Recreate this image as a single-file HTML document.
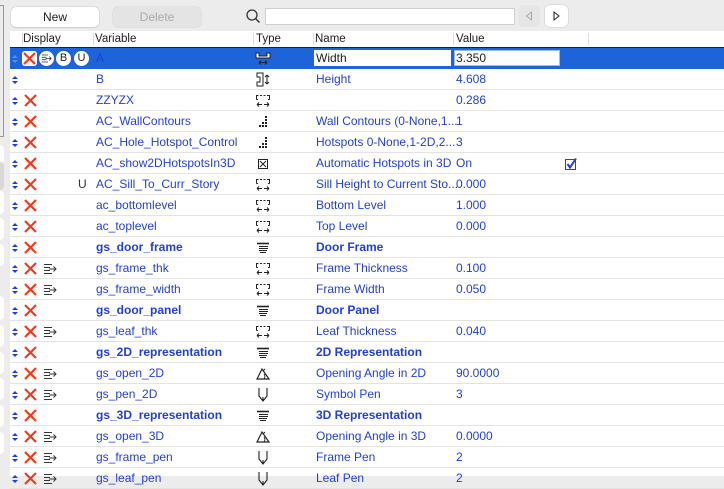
<!DOCTYPE html>
<html><head><meta charset="utf-8"><style>
*{margin:0;padding:0;box-sizing:border-box}
body{width:724px;height:476px;overflow:hidden;background:#ececec;font-family:"Liberation Sans",Helvetica,sans-serif;font-size:12px;position:relative}
.abs{position:absolute}
.btn{position:absolute;top:7px;height:20px;width:88px;border-radius:5px;text-align:center;line-height:20px;font-size:12px}
.tbl{position:absolute;left:10px;top:31px;width:714px;height:445px;background:#fff}
.hd{position:absolute;top:0;left:0;width:714px;height:17px;border-bottom:1px solid #222;background:#fff}
.hd span{position:absolute;top:2px;font-size:11.5px;color:#222}
.hd i{position:absolute;top:2px;height:12px;border-left:1px solid #ddd}
.r{position:absolute;left:0;width:714px;height:21px;border-bottom:1px solid #e3e3e3;color:#1f3ee6}
.r span{position:absolute;top:3px;white-space:nowrap}
.b{font-weight:bold}
.ud{position:absolute;left:2px;top:6px;width:6px;height:10px}
.x{position:absolute;left:13px;top:3px;width:15px;height:15px}
.hi{position:absolute;left:33px;top:5px;width:14px;height:12px}
.ic{position:absolute;left:245px;top:3px;width:16px;height:15px}
.sel{background:#1c64d8;color:#fff}
</style></head><body>
<svg width="0" height="0" style="position:absolute">
<defs>
<symbol id="ud" viewBox="0 0 6 10"><path d="M0 4L3 1L6 4Z M0 6L3 9L6 6Z" fill="#1f3ee6"/></symbol>
<symbol id="udw" viewBox="0 0 6 10"><path d="M0 4L3 1L6 4Z M0 6L3 9L6 6Z" fill="#5a8ee8"/></symbol>
<symbol id="x" viewBox="0 0 15 15"><path d="M2 2L13 13M13 2L2 13" stroke="#f23a1e" stroke-width="2.2"/></symbol>
<symbol id="hi" viewBox="0 0 14 12"><path d="M1 1.5H9M1 4.5H7M1 7.5H7M1 10.5H9M6 6H13M10.5 3.5L13 6L10.5 8.5" stroke="#333" stroke-width="1" fill="none"/></symbol>
<symbol id="len" viewBox="0 0 16 15"><path d="M1.5 6.5V2.5H3.5M5 2.5H7M8.5 2.5H10.5M12 2.5H14.5V6.5M1.5 6.5H3M13 6.5H14.5" stroke="#222" stroke-width="1" fill="none"/><path d="M2 11.5H14M2 11.5L4 9.5M2 11.5L4 13.5M14 11.5L12 9.5M14 11.5L12 13.5" stroke="#222" stroke-width="1" fill="none"/><path d="M7 11.5H9" stroke="#fff"/></symbol>
<symbol id="int" viewBox="0 0 16 15"><g fill="#222"><rect x="4" y="11" width="2" height="2"/><rect x="7" y="11" width="2" height="2"/><rect x="10" y="11" width="2" height="2"/><rect x="7" y="8" width="2" height="2"/><rect x="10" y="8" width="2" height="2"/><rect x="10" y="5" width="2" height="2"/><rect x="10" y="2" width="2" height="2"/></g></symbol>
<symbol id="bool" viewBox="0 0 16 15"><rect x="3.5" y="3.5" width="9" height="9" stroke="#222" fill="none"/><path d="M5 5L11 11M11 5L5 11" stroke="#222"/></symbol>
<symbol id="ttl" viewBox="0 0 16 15"><path d="M4 6.5H13M4 8.5H13M4 10.5H12M5 12.5H11" stroke="#222" stroke-width="1"/><path d="M2 3.5H14" stroke="#222" stroke-width="1.6"/></symbol>
<symbol id="ang" viewBox="0 0 16 15"><path d="M2 13H14L7 3Z" stroke="#222" fill="none" stroke-width="1.2"/><path d="M9 13A4 4 0 0 0 9 8" stroke="#222" fill="none"/><path d="M8 5L10 3" stroke="#222"/></symbol>
<symbol id="pen" viewBox="0 0 16 15"><path d="M4 1V9L8 14L12 9V1M8 10V14" stroke="#222" fill="none" stroke-width="1.1"/></symbol>
<symbol id="wid" viewBox="0 0 16 15"><path d="M1 2V7H15V2H12V5H4V2Z" stroke="#222" fill="#fff"/><path d="M4 11.5H12M4 11.5L6 9.5M4 11.5L6 13.5M12 11.5L10 9.5M12 11.5L10 13.5" stroke="#222"/></symbol>
<symbol id="hgt" viewBox="0 0 16 15"><path d="M2 1H8V14H2V10H5V5H2Z" stroke="#222" fill="none"/><path d="M12 3V12M12 3L10 5M12 3L14 5M12 12L10 10M12 12L14 10" stroke="#222"/></symbol>
</defs></svg>

<div class="abs" style="left:-4px;top:5px;width:8px;height:132px;border:1px solid #999;background:#ececec"></div>
<div class="abs" style="left:-6px;top:145px;width:10px;height:18px;border-radius:4px;background:#fff"></div>
<div class="abs" style="left:-6px;top:162px;width:10px;height:28px;border-radius:4px;background:#d8d8d8"></div>
<div class="abs" style="left:-6px;top:191px;width:10px;height:23px;border-radius:4px;background:#fff"></div>
<div class="abs" style="left:-6px;top:218px;width:10px;height:22px;border-radius:4px;background:#fff"></div>
<div class="abs" style="left:-6px;top:244px;width:10px;height:22px;border-radius:4px;background:#fff"></div>
<div class="abs" style="left:-6px;top:296px;width:10px;height:24px;border-radius:4px;background:#fff"></div>
<div class="abs" style="left:-6px;top:325px;width:10px;height:22px;border-radius:4px;background:#fff"></div>
<div class="abs" style="left:-6px;top:352px;width:10px;height:22px;border-radius:4px;background:#fff"></div>
<div class="abs" style="left:-6px;top:378px;width:10px;height:22px;border-radius:4px;background:#fff"></div>
<div class="abs" style="left:-6px;top:405px;width:10px;height:22px;border-radius:4px;background:#fff"></div>
<div class="abs" style="left:-6px;top:432px;width:10px;height:22px;border-radius:4px;background:#fff"></div>

<div class="btn" style="left:11px;background:#fff;box-shadow:0 0 0 .5px #ccc,0 1px 1px #ccc;color:#222">New</div>
<div class="btn" style="left:113px;background:#e4e4e4;color:#aaa;box-shadow:0 0 0 .5px #d5d5d5">Delete</div>
<svg class="abs" style="left:245px;top:8px" width="16" height="16"><circle cx="7" cy="7" r="5" stroke="#333" stroke-width="1.3" fill="none"/><path d="M10.5 10.5L14.5 14.5" stroke="#333" stroke-width="1.5"/></svg>
<div class="abs" style="left:265px;top:8px;width:250px;height:17px;background:#fff;border:1px solid #d0d0d0"></div>
<div class="abs" style="left:518px;top:5px;width:22px;height:22px;border-radius:5px;background:#e6e6e6"><svg width="22" height="22"><path d="M13.5 7V15L8.5 11Z" stroke="#aaa" fill="none"/></svg></div>
<div class="abs" style="left:545px;top:5px;width:23px;height:22px;border-radius:5px;background:#fff;box-shadow:0 0 0 .5px #ccc"><svg width="23" height="22"><path d="M9 7V15L14 11Z" stroke="#222" fill="none"/></svg></div>

<div class="tbl">
<div class="hd"><i style="left:12px"></i><span style="left:13px">Display</span><i style="left:83px"></i><span style="left:85px">Variable</span><i style="left:243px"></i><span style="left:246px">Type</span><i style="left:303px"></i><span style="left:305px">Name</span><i style="left:443px"></i><span style="left:446px">Value</span><i style="left:578px"></i></div>

<div class="r sel" style="top:17px;height:21px;border:none">
<svg class="ud"><use href="#udw"/></svg>
<div class="abs" style="left:12px;top:3px;width:15px;height:15px;background:#fff;border-radius:3px"><svg width="15" height="15"><use href="#x"/></svg></div>
<div class="abs" style="left:29px;top:3px;width:15px;height:15px;background:#fff;border-radius:8px"><svg width="15" height="15" viewBox="0 0 14 12" style="padding:2px"><use href="#hi"/></svg></div>
<div class="abs" style="left:46px;top:3px;width:15px;height:15px;background:#fff;border-radius:8px;color:#222;text-align:center;line-height:15px;font-size:11px">B</div>
<div class="abs" style="left:64px;top:3px;width:15px;height:15px;background:#fff;border-radius:8px;color:#222;text-align:center;line-height:15px;font-size:11px">U</div>
<span style="left:86px;color:#1f3ee6">A</span>
<svg class="ic" style="left:245px"><use href="#wid"/></svg>
<div class="abs" style="left:304px;top:2px;width:137px;height:16px;background:#fff;color:#222;padding-left:2px;line-height:16px">Width</div>
<div class="abs" style="left:444px;top:2px;width:106px;height:16px;background:#fff;color:#222;padding-left:1px;line-height:14px;border:1px solid #9bbcf0">3.350</div>
</div>

<div class="r" style="top:38px"><svg class="ud"><use href="#ud"/></svg><span style="left:86px">B</span><svg class="ic"><use href="#hgt"/></svg><span style="left:306px">Height</span><span style="left:446px">4.608</span></div>
<div class="r" style="top:59px"><svg class="ud"><use href="#ud"/></svg><svg class="x"><use href="#x"/></svg><span style="left:86px">ZZYZX</span><svg class="ic"><use href="#len"/></svg><span style="left:446px">0.286</span></div>
<div class="r" style="top:80px"><svg class="ud"><use href="#ud"/></svg><svg class="x"><use href="#x"/></svg><span style="left:86px">AC_WallContours</span><svg class="ic"><use href="#int"/></svg><span style="left:306px">Wall Contours (0-None,1...</span><span style="left:446px">1</span></div>
<div class="r" style="top:101px"><svg class="ud"><use href="#ud"/></svg><svg class="x"><use href="#x"/></svg><span style="left:86px">AC_Hole_Hotspot_Control</span><svg class="ic"><use href="#int"/></svg><span style="left:306px">Hotspots 0-None,1-2D,2...</span><span style="left:446px">3</span></div>
<div class="r" style="top:122px"><svg class="ud"><use href="#ud"/></svg><svg class="x"><use href="#x"/></svg><span style="left:86px">AC_show2DHotspotsIn3D</span><svg class="ic"><use href="#bool"/></svg><span style="left:306px">Automatic Hotspots in 3D</span><span style="left:446px">On</span><svg class="abs" style="left:555px;top:5px" width="12" height="12"><rect x=".5" y="1.5" width="10" height="10" stroke="#1f3ee6" fill="none"/><path d="M2.5 6L5 9.5L11 0.5" stroke="#1f3ee6" stroke-width="2" fill="none"/></svg></div>
<div class="r" style="top:143px"><svg class="ud"><use href="#ud"/></svg><svg class="x"><use href="#x"/></svg><span style="left:68px;color:#333">U</span><span style="left:86px">AC_Sill_To_Curr_Story</span><svg class="ic"><use href="#len"/></svg><span style="left:306px">Sill Height to Current Sto...</span><span style="left:446px">0.000</span></div>
<div class="r" style="top:164px"><svg class="ud"><use href="#ud"/></svg><svg class="x"><use href="#x"/></svg><span style="left:86px">ac_bottomlevel</span><svg class="ic"><use href="#len"/></svg><span style="left:306px">Bottom Level</span><span style="left:446px">1.000</span></div>
<div class="r" style="top:185px"><svg class="ud"><use href="#ud"/></svg><svg class="x"><use href="#x"/></svg><span style="left:86px">ac_toplevel</span><svg class="ic"><use href="#len"/></svg><span style="left:306px">Top Level</span><span style="left:446px">0.000</span></div>
<div class="r" style="top:206px"><svg class="ud"><use href="#ud"/></svg><svg class="x"><use href="#x"/></svg><span class="b" style="left:86px">gs_door_frame</span><svg class="ic"><use href="#ttl"/></svg><span class="b" style="left:306px">Door Frame</span></div>
<div class="r" style="top:227px"><svg class="ud"><use href="#ud"/></svg><svg class="x"><use href="#x"/></svg><svg class="hi"><use href="#hi"/></svg><span style="left:86px">gs_frame_thk</span><svg class="ic"><use href="#len"/></svg><span style="left:306px">Frame Thickness</span><span style="left:446px">0.100</span></div>
<div class="r" style="top:248px"><svg class="ud"><use href="#ud"/></svg><svg class="x"><use href="#x"/></svg><svg class="hi"><use href="#hi"/></svg><span style="left:86px">gs_frame_width</span><svg class="ic"><use href="#len"/></svg><span style="left:306px">Frame Width</span><span style="left:446px">0.050</span></div>
<div class="r" style="top:269px"><svg class="ud"><use href="#ud"/></svg><svg class="x"><use href="#x"/></svg><span class="b" style="left:86px">gs_door_panel</span><svg class="ic"><use href="#ttl"/></svg><span class="b" style="left:306px">Door Panel</span></div>
<div class="r" style="top:290px"><svg class="ud"><use href="#ud"/></svg><svg class="x"><use href="#x"/></svg><svg class="hi"><use href="#hi"/></svg><span style="left:86px">gs_leaf_thk</span><svg class="ic"><use href="#len"/></svg><span style="left:306px">Leaf Thickness</span><span style="left:446px">0.040</span></div>
<div class="r" style="top:311px"><svg class="ud"><use href="#ud"/></svg><svg class="x"><use href="#x"/></svg><span class="b" style="left:86px">gs_2D_representation</span><svg class="ic"><use href="#ttl"/></svg><span class="b" style="left:306px">2D Representation</span></div>
<div class="r" style="top:332px"><svg class="ud"><use href="#ud"/></svg><svg class="x"><use href="#x"/></svg><svg class="hi"><use href="#hi"/></svg><span style="left:86px">gs_open_2D</span><svg class="ic"><use href="#ang"/></svg><span style="left:306px">Opening Angle in 2D</span><span style="left:446px">90.0000</span></div>
<div class="r" style="top:353px"><svg class="ud"><use href="#ud"/></svg><svg class="x"><use href="#x"/></svg><svg class="hi"><use href="#hi"/></svg><span style="left:86px">gs_pen_2D</span><svg class="ic"><use href="#pen"/></svg><span style="left:306px">Symbol Pen</span><span style="left:446px">3</span></div>
<div class="r" style="top:374px"><svg class="ud"><use href="#ud"/></svg><svg class="x"><use href="#x"/></svg><span class="b" style="left:86px">gs_3D_representation</span><svg class="ic"><use href="#ttl"/></svg><span class="b" style="left:306px">3D Representation</span></div>
<div class="r" style="top:395px"><svg class="ud"><use href="#ud"/></svg><svg class="x"><use href="#x"/></svg><svg class="hi"><use href="#hi"/></svg><span style="left:86px">gs_open_3D</span><svg class="ic"><use href="#ang"/></svg><span style="left:306px">Opening Angle in 3D</span><span style="left:446px">0.0000</span></div>
<div class="r" style="top:416px"><svg class="ud"><use href="#ud"/></svg><svg class="x"><use href="#x"/></svg><svg class="hi"><use href="#hi"/></svg><span style="left:86px">gs_frame_pen</span><svg class="ic"><use href="#pen"/></svg><span style="left:306px">Frame Pen</span><span style="left:446px">2</span></div>
<div class="r" style="top:437px"><svg class="ud"><use href="#ud"/></svg><svg class="x"><use href="#x"/></svg><svg class="hi"><use href="#hi"/></svg><span style="left:86px">gs_leaf_pen</span><svg class="ic"><use href="#pen"/></svg><span style="left:306px">Leaf Pen</span><span style="left:446px">2</span></div>
</div>
</body></html>
